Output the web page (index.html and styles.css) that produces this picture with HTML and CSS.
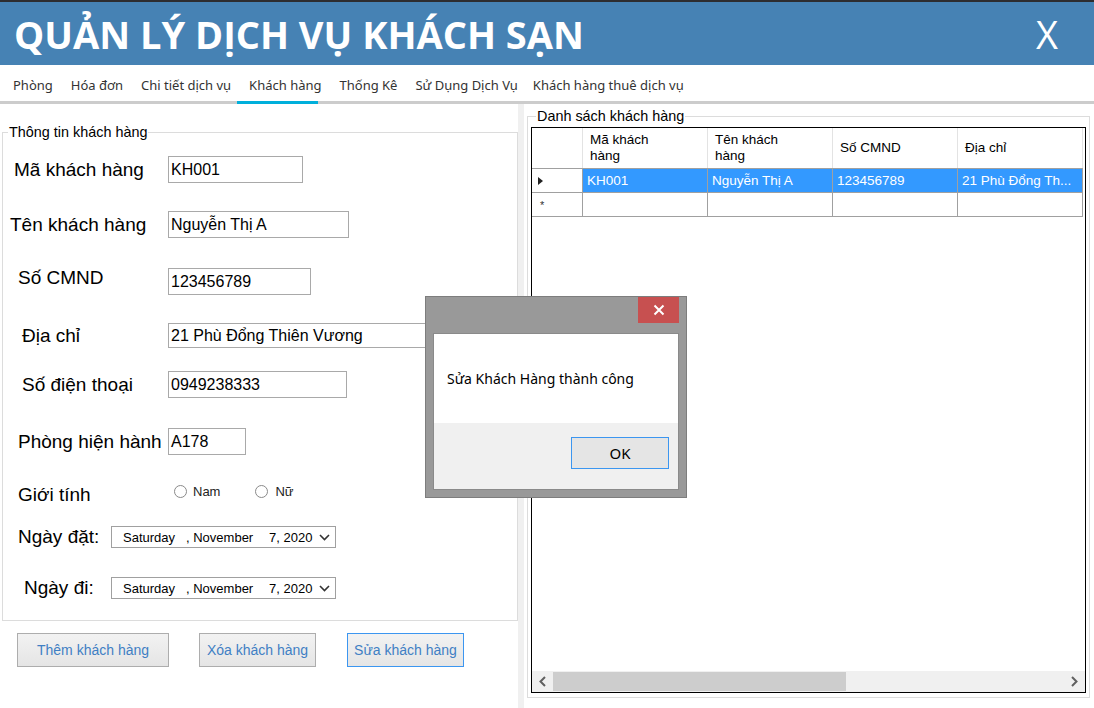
FILE: index.html
```html
<!DOCTYPE html>
<html lang="vi">
<head>
<meta charset="utf-8">
<title>Quản lý dịch vụ khách sạn</title>
<link rel="stylesheet" href="styles.css">
</head>
<body>
<div class="app">
  <header class="header">
    <h1 class="title">QUẢN LÝ DỊCH VỤ KHÁCH SẠN</h1>
    <span class="close">X</span>
  </header>
  <nav class="tabs">
    <span class="tab">Phòng</span>
    <span class="tab">Hóa đơn</span>
    <span class="tab">Chi tiết dịch vụ</span>
    <span class="tab active">Khách hàng</span>
    <span class="tab">Thống Kê</span>
    <span class="tab">Sử Dụng Dịch Vụ</span>
    <span class="tab last">Khách hàng thuê dịch vụ</span>
  </nav>
  <main class="main">
    <section class="left">
      <fieldset class="group info">
        <legend class="legend">Thông tin khách hàng</legend>
        <div class="row r1"><span class="lbl p11">Mã khách hàng</span><div class="box w135">KH001</div></div>
        <div class="row r2"><span class="lbl p7">Tên khách hàng</span><div class="box w181">Nguyễn Thị A</div></div>
        <div class="row r3"><span class="lbl p15 up">Số CMND</span><div class="box w143">123456789</div></div>
        <div class="row r4"><span class="lbl p19">Địa chỉ</span><div class="box w280 h25">21 Phù Đổng Thiên Vương</div></div>
        <div class="row r5"><span class="lbl p19">Số điện thoại</span><div class="box w179">0949238333</div></div>
        <div class="row r6"><span class="lbl p15">Phòng hiện hành</span><div class="box w78">A178</div></div>
        <div class="row r7">
          <span class="lbl p15 down">Giới tính</span>
          <span class="radio rad-nam"><span class="dot"></span>Nam</span>
          <span class="radio rad-nu"><span class="dot"></span>Nữ</span>
        </div>
        <div class="row r8"><span class="lbl short p15">Ngày đặt:</span>
          <div class="date"><span class="d1">Saturday</span><span class="d2">, November</span><span class="d3">7, 2020</span>
            <svg class="chev" width="11" height="7" viewBox="0 0 11 7"><polyline points="1,1 5.5,5.5 10,1" fill="none" stroke="#333" stroke-width="1.6"/></svg>
          </div>
        </div>
        <div class="row r9"><span class="lbl short p21">Ngày đi:</span>
          <div class="date"><span class="d1">Saturday</span><span class="d2">, November</span><span class="d3">7, 2020</span>
            <svg class="chev" width="11" height="7" viewBox="0 0 11 7"><polyline points="1,1 5.5,5.5 10,1" fill="none" stroke="#333" stroke-width="1.6"/></svg>
          </div>
        </div>
      </fieldset>
      <div class="actions">
        <button class="btn b1">Thêm khách hàng</button>
        <button class="btn b2">Xóa khách hàng</button>
        <button class="btn b3 focus">Sửa khách hàng</button>
      </div>
    </section>
    <div class="splitter"></div>
    <section class="right">
      <fieldset class="group list">
        <legend class="legend">Danh sách khách hàng</legend>
        <div class="grid">
          <div class="grow head">
            <div class="gc rh"></div>
            <div class="gc">Mã khách<br>hàng</div>
            <div class="gc">Tên khách<br>hàng</div>
            <div class="gc">Số CMND</div>
            <div class="gc">Địa chỉ</div>
          </div>
          <div class="grow sel">
            <div class="gc rh"><svg width="5" height="8" viewBox="0 0 5 8"><polygon points="0,0 5,4 0,8" fill="#222"/></svg></div>
            <div class="gc">KH001</div>
            <div class="gc">Nguyễn Thị A</div>
            <div class="gc">123456789</div>
            <div class="gc">21 Phù Đổng Th...</div>
          </div>
          <div class="grow newrow">
            <div class="gc rh"><span class="star">*</span></div>
            <div class="gc"></div>
            <div class="gc"></div>
            <div class="gc"></div>
            <div class="gc"></div>
          </div>
          <div class="gfill"></div>
          <div class="hscroll">
            <span class="arrow"><svg width="7" height="11" viewBox="0 0 7 11"><polyline points="6,1 1.5,5.5 6,10" fill="none" stroke="#606060" stroke-width="2"/></svg></span>
            <span class="track"><span class="thumb"></span></span>
            <span class="arrow"><svg width="7" height="11" viewBox="0 0 7 11"><polyline points="1,1 5.5,5.5 1,10" fill="none" stroke="#606060" stroke-width="2"/></svg></span>
          </div>
        </div>
      </fieldset>
    </section>
  </main>
  <div class="dialog">
    <div class="dlg-bar">
      <span class="dlg-close"><svg width="12" height="12" viewBox="0 0 12 12"><path d="M1.5 1.5 L10.5 10.5 M10.5 1.5 L1.5 10.5" stroke="#fff" stroke-width="2"/></svg></span>
    </div>
    <div class="dlg-client">
      <div class="dlg-msg">Sửa Khách Hàng thành công</div>
      <div class="dlg-foot"><button class="dlg-ok">OK</button></div>
    </div>
  </div>
</div>
</body>
</html>
```
FILE: styles.css
```css
* { box-sizing: border-box; }
html, body { margin: 0; padding: 0; }
body {
  width: 1094px;
  height: 708px;
  overflow: hidden;
  background: #fff;
  font-family: "Liberation Sans", Arial, sans-serif;
  color: #000;
}
.app {
  position: relative;
  width: 1094px;
  height: 708px;
  border-top: 2px solid #2d2d30;
}

/* header */
.header {
  height: 63px;
  background: #4682b4;
  display: flex;
  align-items: center;
  justify-content: space-between;
  padding: 0 36px 0 14px;
}
.title {
  margin: 0;
  font-family: "Open Sans", "Noto Sans", sans-serif;
  font-weight: 700;
  font-size: 38px;
  line-height: 1;
  color: #fff;
}
.close {
  font-family: "Open Sans", "Noto Sans", sans-serif;
  font-size: 38px;
  line-height: 1;
  color: #fff;
}

/* tabs */
.tabs {
  height: 39px;
  border-bottom: 3px solid #cccccc;
  display: flex;
  align-items: stretch;
  gap: 18px;
  padding-left: 13px;
  font-family: "Noto Sans", "Open Sans", sans-serif;
  font-size: 13px;
  color: #333;
}
.tab {
  position: relative;
  display: flex;
  align-items: center;
  padding-top: 4px;
}
.tab.last { margin-left: -3px; }
.tab.active::after {
  content: "";
  position: absolute;
  left: -12px;
  width: 81px;
  bottom: -3px;
  height: 3px;
  background: #00afdb;
}

/* main */
.main {
  display: flex;
  height: 604px;
}
.left { width: 518px; }
.splitter { width: 6px; background: #f0f0f0; }
.right { flex: 1; }

.group {
  margin: 0;
  padding: 0;
  border: 1px solid #dcdcdc;
  min-width: 0;
}
.legend {
  font-family: "Liberation Sans", Arial, sans-serif;
  font-size: 14.4px;
  line-height: 16px;
  padding: 0 1px;
  margin-left: 5px;
}
.info {
  margin: 20px 0 0 2px;
  width: 516px;
  padding-bottom: 21px;
}

.row {
  display: flex;
  align-items: center;
  height: 27px;
}
.r1 { margin-top: 16px; }
.r2 { margin-top: 28px; }
.r3 { margin-top: 30px; }
.r4 { margin-top: 28px; height: 25px; }
.r5 { margin-top: 23px; }
.r6 { margin-top: 30px; }
.r7 { margin-top: 27px; height: 18px; }
.r8 { margin-top: 26px; height: 22px; }
.r9 { margin-top: 29px; height: 22px; }

.lbl {
  width: 165px;
  flex: none;
  font-size: 19px;
  line-height: 20px;
  white-space: nowrap;
}
.lbl.short { width: 108px; }
.lbl.up { margin-bottom: 8px; }
.lbl.down { margin-top: 8px; }
.p7 { padding-left: 7px; }
.p11 { padding-left: 11px; }
.p15 { padding-left: 15px; }
.p19 { padding-left: 19px; }
.p21 { padding-left: 21px; }

.box {
  height: 27px;
  border: 1px solid #a9a9a9;
  font-size: 16px;
  line-height: 25px;
  padding-left: 2px;
  white-space: nowrap;
  overflow: hidden;
  background: #fff;
}
.box.h25 { height: 25px; line-height: 23px; }
.w78 { width: 78px; }
.w135 { width: 135px; }
.w143 { width: 143px; }
.w179 { width: 179px; }
.w181 { width: 181px; }
.w280 { width: 280px; }

.radio {
  display: flex;
  align-items: center;
  font-size: 13px;
  color: #222;
}
.dot {
  width: 13px;
  height: 13px;
  border: 1px solid #8a8a8a;
  border-radius: 50%;
  background: #fff;
  margin-right: 6px;
}
.rad-nam { margin-left: 6px; }
.rad-nu { margin-left: 35px; }
.rad-nu .dot { margin-right: 7px; }

.date {
  width: 225px;
  height: 22px;
  border: 1px solid #a0a0a0;
  display: flex;
  align-items: center;
  font-size: 13px;
  padding-left: 11px;
  color: #000;
}
.d1 { width: 63px; }
.d2 { width: 83px; }
.d3 { width: 46px; }
.chev { margin-left: 4px; }

/* buttons */
.actions {
  display: flex;
  gap: 30px;
  margin-top: 12px;
  padding-left: 17px;
}
.btn {
  height: 34px;
  border: 1px solid #adadad;
  background: linear-gradient(#f2f2f2, #e5e5e5);
  font-family: "Liberation Sans", Arial, sans-serif;
  font-size: 14px;
  color: #3f7fc4;
  padding: 0;
}
.b1 { width: 152px; }
.b2 { width: 117px; }
.b3 { width: 117px; margin-left: 1px; }
.btn.focus { border-color: #3c96f0; }

/* list */
.list {
  margin: 4px 4px 0 3px;
  padding: 0 3px 4px 3px;
}
.grid {
  margin-top: 3px;
  height: 566px;
  border: 1px solid #000;
  display: flex;
  flex-direction: column;
  background: #fff;
}
.grow {
  display: flex;
  height: 24px;
  flex: none;
}
.grow.head { height: 40px; }
.gc {
  width: 125px;
  flex: none;
  border-right: 1px solid #a0a0a0;
  border-bottom: 1px solid #a0a0a0;
  font-size: 13.5px;
  padding-left: 4px;
  display: flex;
  align-items: center;
  white-space: nowrap;
  overflow: hidden;
}
.gc.rh {
  width: 51px;
  padding-left: 6px;
  background: #fff;
}
.head .gc {
  border-right-color: #e3e3e3;
  border-bottom: none;
  font-size: 13.5px;
  line-height: 16px;
  padding-left: 7px;
  white-space: normal;
  color: #000;
}
.sel .gc { background: #3399ff; color: #fff; border-top: 1px solid #a0a0a0; }
.sel .gc.rh { background: #fff; }
.sel { height: 25px; }
.star { font-size: 11px; color: #333; padding-left: 2px; }
.gfill { flex: 1; }
.hscroll {
  height: 21px;
  flex: none;
  display: flex;
  background: #f0f0f0;
}
.arrow {
  width: 21px;
  display: flex;
  align-items: center;
  justify-content: center;
}
.track {
  flex: 1;
  display: flex;
  padding: 1px 0;
}
.thumb {
  width: 293px;
  background: #cdcdcd;
}

/* dialog */
.dialog {
  position: absolute;
  left: 425px;
  top: 294px;
  width: 262px;
  height: 202px;
  background: #999;
  border: 1px solid #7d7d7d;
  display: flex;
  flex-direction: column;
  padding: 0 7px 7px 7px;
}
.dlg-bar {
  height: 36px;
  display: flex;
  justify-content: flex-end;
  flex: none;
}
.dlg-close {
  width: 41px;
  height: 26px;
  background: #c75050;
  display: flex;
  align-items: center;
  justify-content: center;
}
.dlg-client {
  flex: 1;
  border: 1px solid #8a8a8a;
  display: flex;
  flex-direction: column;
}
.dlg-msg {
  height: 89px;
  background: #fff;
  font-family: "Noto Sans", "Open Sans", sans-serif;
  font-size: 14px;
  padding: 35px 0 0 13px;
  color: #000;
}
.dlg-foot {
  flex: 1;
  background: #f0f0f0;
  display: flex;
  justify-content: flex-end;
  align-items: flex-start;
  padding: 14px 9px 0 0;
}
.dlg-ok {
  width: 98px;
  height: 32px;
  border: 1px solid #3c96f0;
  background: #e5e5e5;
  font-family: "Noto Sans", "Open Sans", sans-serif;
  font-size: 15px;
  color: #000;
  padding: 0;
}
```
